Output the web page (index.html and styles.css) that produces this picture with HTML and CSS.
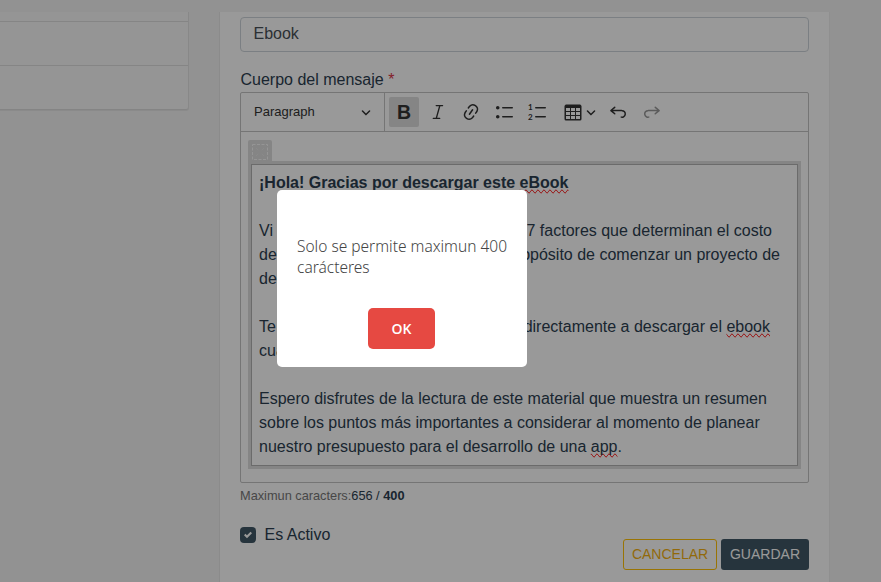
FILE: index.html
```html
<!DOCTYPE html>
<html lang="es">
<head>
<meta charset="utf-8">
<title>Ebook</title>
<link rel="stylesheet" href="styles.css">
</head>
<body>
<div class="page">
  <aside class="side">
    <div class="side-row side-first"></div>
    <div class="side-row"></div>
    <div class="side-row"></div>
  </aside>
  <main class="panel">
    <div class="field">Ebook</div>
    <div class="label">Cuerpo del mensaje <span class="req">*</span></div>
    <div class="editor">
      <div class="toolbar">
        <div class="heading-select"><span>Paragraph</span>
          <svg class="chev" viewBox="0 0 10 10"><path d="M.941 4.523a.75.75 0 1 1 1.06-1.06l3.006 3.005 3.005-3.005a.75.75 0 1 1 1.06 1.06l-3.549 3.55a.75.75 0 0 1-1.168-.136z"/></svg>
        </div>
        <div class="tool on"><b>B</b></div>
        <div class="tool"><svg viewBox="0 0 20 20"><path class="line" d="M8.2 3.6h6.4M5.3 16.4h6.4M11.8 3.8 8.3 16.2"/></svg></div>
        <div class="tool"><svg viewBox="0 0 20 20"><path d="m11.077 15 .991-1.416a.75.75 0 1 1 1.229.86l-1.148 1.64a.748.748 0 0 1-.217.206 5.251 5.251 0 0 1-8.503-5.955.741.741 0 0 1 .12-.274l1.147-1.639a.75.75 0 1 1 1.228.86L4.933 10.7l.006.003a3.75 3.75 0 0 0 6.132 4.294l.006.004zm5.494-5.335a.748.748 0 0 1-.12.274l-1.147 1.639a.75.75 0 1 1-1.228-.86l.86-1.23a3.75 3.75 0 0 0-6.144-4.301l-.86 1.229a.75.75 0 0 1-1.229-.86l1.148-1.64a.748.748 0 0 1 .217-.206 5.251 5.251 0 0 1 8.503 5.955zm-4.563-2.532a.75.75 0 0 1 .184 1.045l-3.155 4.505a.75.75 0 1 1-1.229-.86l3.155-4.506a.75.75 0 0 1 1.045-.184z"/></svg></div>
        <div class="tool"><svg viewBox="0 0 20 20"><path d="M7 5.75c0 .414.336.75.75.75h9.5a.75.75 0 1 0 0-1.5h-9.5a.75.75 0 0 0-.75.75zm-6 0C1 4.784 1.777 4 2.75 4c.966 0 1.75.777 1.75 1.75 0 .966-.777 1.75-1.75 1.75C1.784 7.5 1 6.723 1 5.75zm6 9c0 .414.336.75.75.75h9.5a.75.75 0 1 0 0-1.5h-9.5a.75.75 0 0 0-.75.75zm-6 0c0-.966.777-1.75 1.75-1.75.966 0 1.75.777 1.75 1.75 0 .966-.777 1.75-1.75 1.75-.966 0-1.75-.777-1.75-1.75z"/></svg></div>
        <div class="tool"><svg viewBox="0 0 20 20"><path d="M7 5.75c0 .414.336.75.75.75h9.5a.75.75 0 1 0 0-1.5h-9.5a.75.75 0 0 0-.75.75zm0 9c0 .414.336.75.75.75h9.5a.75.75 0 1 0 0-1.5h-9.5a.75.75 0 0 0-.75.75z"/><text x="0" y="8.3">1</text><text x="0" y="18">2</text></svg></div>
        <div class="tool split"><svg viewBox="0 0 20 20"><path d="M3 6v3h4V6H3zm0 4v3h4v-3H3zm0 4v3h4v-3H3zm5 3h4v-3H8v3zm5 0h4v-3h-4v3zm4-4v-3h-4v3h4zm0-4V6h-4v3h4zm1.5 8a1.5 1.5 0 0 1-1.5 1.5H3A1.5 1.5 0 0 1 1.5 17V4c.222-.863 1.068-1.5 2-1.5h13c.932 0 1.778.637 2 1.5v13zM12 13v-3H8v3h4zm0-4V6H8v3h4z"/></svg><svg class="chev" viewBox="0 0 10 10"><path d="M.941 4.523a.75.75 0 1 1 1.06-1.06l3.006 3.005 3.005-3.005a.75.75 0 1 1 1.06 1.06l-3.549 3.55a.75.75 0 0 1-1.168-.136z"/></svg></div>
        <div class="tool"><svg viewBox="0 0 20 20"><path d="m5.042 9.367 2.189 1.837a.75.75 0 0 1-.965 1.149l-3.788-3.18a.747.747 0 0 1-.21-.284.75.75 0 0 1 .17-.945L6.23 4.762a.75.75 0 1 1 .964 1.15L4.863 7.866h8.917A.75.75 0 0 1 14 7.9a4 4 0 1 1-1.477 7.718l.344-1.489a2.5 2.5 0 1 0 1.094-4.73l.008-.032H5.042z"/></svg></div>
        <div class="tool off"><svg class="flip" viewBox="0 0 20 20"><path d="m5.042 9.367 2.189 1.837a.75.75 0 0 1-.965 1.149l-3.788-3.18a.747.747 0 0 1-.21-.284.75.75 0 0 1 .17-.945L6.23 4.762a.75.75 0 1 1 .964 1.15L4.863 7.866h8.917A.75.75 0 0 1 14 7.9a4 4 0 1 1-1.477 7.718l.344-1.489a2.5 2.5 0 1 0 1.094-4.73l.008-.032H5.042z"/></svg></div>
      </div>
      <div class="content">
        <div class="handle"><svg viewBox="0 0 16 16"><rect x=".5" y=".5" width="15" height="15"/><path d="M4 4l3 3M12 4l-3 3M4 12l3-3M12 12l-3-3"/></svg></div>
        <div class="widget"><div class="cell">
          <p><strong>¡Hola! Gracias por descargar este <span class="sp">eBook</span></strong></p>
          <p></p>
          <p class="gap g1"><span>Vi</span><span>7 factores que determinan el costo</span></p>
          <p class="gap g2"><span>de</span><span>opósito de comenzar un proyecto de</span></p>
          <p>de</p>
          <p></p>
          <p class="gap g3"><span>Te</span><span>directamente a descargar el <span class="sp">ebook</span></span></p>
          <p>cuá</p>
          <p></p>
          <p>Espero disfrutes de la lectura de este material que muestra un resumen</p>
          <p>sobre los puntos más importantes a considerar al momento de planear</p>
          <p>nuestro presupuesto para el desarrollo de una <span class="sp">app</span>.</p>
        </div></div>
      </div>
    </div>
    <div class="counter">Maximun caracters:<span>656 / <b>400</b></span></div>
    <div class="footer">
      <div class="check"><span class="box"><svg viewBox="0 0 8 8"><path d="M6.564.75l-3.59 3.612-1.538-1.55L0 4.26 2.974 7.25 8 2.193z"/></svg></span>Es Activo</div>
      <div class="actions"><button class="btn cancel">CANCELAR</button><button class="btn save">GUARDAR</button></div>
    </div>
  </main>
</div>
<div class="overlay">
  <div class="modal">
    <div class="modal-text">Solo se permite maximun 400 carácteres</div>
    <button class="ok">OK</button>
  </div>
</div>
</body>
</html>
```
FILE: styles.css
```css
* { box-sizing: border-box; }
body {
  margin: 0;
  width: 881px;
  height: 582px;
  overflow: hidden;
  background: #f3f3f3;
  font: 16px/24px "Liberation Sans", Arial, sans-serif;
  color: #2c3e50;
}
p { margin: 0; height: 24px; white-space: nowrap; }
.page {
  display: flex;
  justify-content: space-between;
  align-items: flex-start;
  height: 582px;
  padding: 12px 51px 0 0;
}
.side {
  width: 189px;
  background: #f9f9f9;
  border-right: 1px solid #e3e3e3;
  border-bottom: 1px solid #dcdcdc;
  border-radius: 0 0 3px 0;
  box-shadow: 0 1px 0 #e6e6e6;
}
.side-row { height: 44px; border-top: 1px solid #dedede; }
.side-first { height: 9px; border-top: 0; }
.panel {
  width: 611px;
  height: 570px;
  padding: 5px 20px 0;
  background: #fff;
  border-left: 1px solid #e8e8e8;
  border-right: 1px solid #efefef;
}
.field {
  height: 35px;
  padding: 4px 12.5px;
  border: 1px solid #ced4da;
  border-radius: 4px;
  color: #495057;
}
.label { margin-top: 16px; height: 24px; padding-left: .5px; }
.req { color: #dc3545; }
.editor { height: 391px; border: 1px solid #c4c4c4; border-radius: 2px; }
.toolbar { display: flex; align-items: center; height: 39px; border-bottom: 1px solid #c4c4c4; }
.heading-select {
  display: flex;
  align-items: center;
  justify-content: space-between;
  width: 144px;
  height: 38px;
  padding: 0 13px;
  margin-right: 4px;
  border-right: 1px solid #c4c4c4;
  font-size: 13px;
  color: #333;
}
.tool { display: flex; align-items: center; justify-content: center; width: 30px; height: 30px; margin-right: 3.6px; border-radius: 2px; color: #333; }
.tool b { font: bold 19.5px/30px "Liberation Sans", Arial, sans-serif; }
.on { background: #dedede; }
.off { opacity: .5; }
.split { width: 42px; gap: 3px; margin-left: 1.5px; margin-right: 2.5px; }
.tool svg { width: 20px; height: 20px; fill: #333; flex: none; }
.tool svg.chev, .chev { width: 10px; height: 10px; fill: #333; }
.tool text { font: bold 8px Lato, sans-serif; }
.line { stroke: #333; stroke-width: 1.3; fill: none; stroke-linecap: round; }
.flip { transform: scaleX(-1); }
.content { padding: 8px 7px 0; }
.handle { width: 24px; height: 21px; padding: 4px; background: #dedede; border-radius: 2px 2px 0 0; }
.handle svg { display: block; width: 16px; height: 16px; fill: none; stroke: #f8f8f8; stroke-dasharray: 3 1.5; }
.handle path { stroke: #e9e9e9; stroke-width: .8; }
.widget { width: 553px; height: 308px; border: 3px solid #dedede; }
.cell { height: 302px; padding: 6px 7px 4px; border: 1px solid #b3b3b3; }
.sp { text-decoration: spelling-error; }
.gap { display: flex; justify-content: space-between; }
.g1 { width: 513px; }
.g2 { width: 521px; }
.g3 { width: 511px; }
.counter { height: 25px; padding-top: 1px; font-size: 12.8px; letter-spacing: -.02px; color: #777; }
.counter span { color: #2c3e50; }
.footer { display: flex; justify-content: space-between; padding-top: 15px; }
.check { display: flex; align-items: center; gap: 8.5px; height: 24px; }
.box { display: flex; align-items: center; justify-content: center; width: 16px; height: 16px; border-radius: 4px; background: #405866; }
.box svg { width: 8px; height: 8px; fill: #fff; }
.actions { display: flex; gap: 4px; padding-top: 16px; }
.btn { height: 31px; padding: 0; border-radius: 3px; font: 14px/21px "Liberation Sans", Arial, sans-serif; }
.cancel { width: 94px; border: 1px solid #ffc107; background: transparent; color: #f3b012; }
.save { width: 88px; border: 0; background: #405866; color: #fff; }
.overlay { position: fixed; inset: 0; background: rgba(0, 0, 0, .4); }
.modal {
  position: absolute;
  left: 277px;
  top: 190px;
  width: 250px;
  height: 177px;
  padding: 46px 19px 0 20px;
  background: #fff;
  border-radius: 5px;
}
.modal-text { height: 72px; font: 300 15.5px/21px "Noto Sans", sans-serif; color: #444; }
.ok {
  display: block;
  width: 67px;
  height: 41px;
  margin: 0 auto 0 71px;
  padding: 0;
  border: 0;
  border-radius: 5px;
  background: #e64942;
  color: #fff;
  font: 600 14px/20px "Open Sans", sans-serif;
}
```
